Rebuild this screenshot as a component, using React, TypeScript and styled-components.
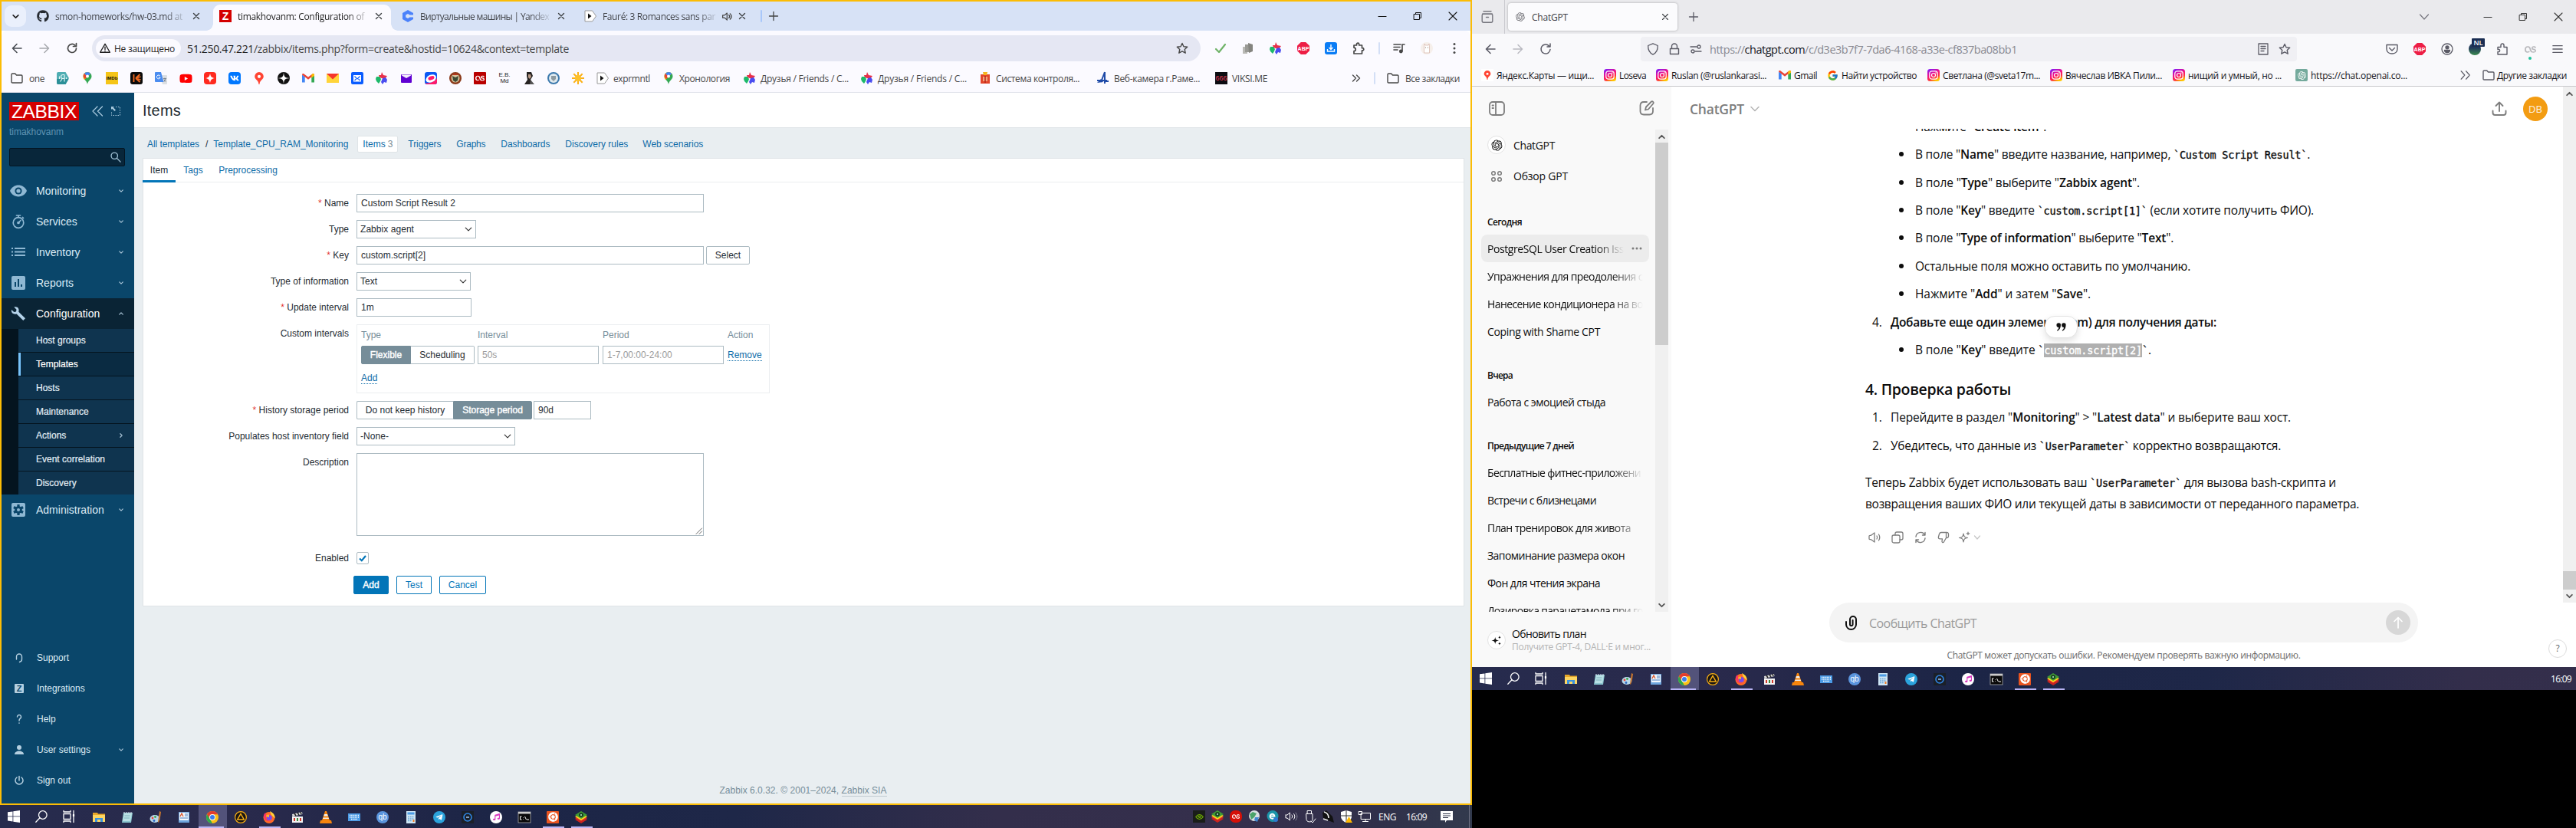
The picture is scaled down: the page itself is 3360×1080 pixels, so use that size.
import React, { ReactNode, useLayoutEffect, useRef } from "react";
import styled, { createGlobalStyle, css } from "styled-components";
import { FaGithub, FaTelegramPlane, FaUbuntu, FaVk, FaMusic, FaLastfm, FaYoutube } from "react-icons/fa";
import { FcGoogle } from "react-icons/fc";
import { RiOpenaiFill } from "react-icons/ri";

const UI = `"Open Sans", "Noto Sans", sans-serif`;
const ARIAL = `"Liberation Sans", Arial, sans-serif`;

const Global = createGlobalStyle`
  * { box-sizing: border-box; }
  html, body { margin: 0; padding: 0; background: #000; }
  body { width: 3360px; height: 1080px; overflow: hidden; font-family: ${UI}; }
  svg { display: block; flex: none; overflow: visible; }
`;

/* ---------- text that tracks itself to a given measure ---------- */
const Run = styled.span`
  display: inline-block;
  white-space: pre;
  flex: none;
`;
function Fit({ w, children }: { w: number; children: ReactNode }) {
  const ref = useRef<HTMLSpanElement>(null);
  useLayoutEffect(() => {
    const el = ref.current;
    if (!el) return;
    el.style.letterSpacing = "0px";
    const natural = el.getBoundingClientRect().width;
    const n = (el.textContent || "").length || 1;
    el.style.letterSpacing = `${(w - natural) / n}px`;
  }, [w]);
  return <Run ref={ref}>{children}</Run>;
}

/* ---------- icon helpers ---------- */
type IP = { s?: number; c?: string; sw?: number; vb?: number; fill?: boolean; children?: ReactNode };
const Ico = ({ s = 16, c = "#474747", sw = 1.5, vb = 16, fill, children }: IP) => (
  <svg width={s} height={s} viewBox={`0 0 ${vb} ${vb}`} fill={fill ? c : "none"} stroke={fill ? "none" : c} strokeWidth={sw} strokeLinecap="round" strokeLinejoin="round">
    {children}
  </svg>
);
const Raw = ({ s = 16, children }: { s?: number; children: ReactNode }) => (
  <svg width={s} height={s} viewBox="0 0 16 16">{children}</svg>
);
const Cross = ({ s = 8, c = "#3c4043", sw = 1.4 }: IP) => <Ico s={s} vb={8} c={c} sw={sw}><path d="M.5.5l7 7M7.500.5l-7 7" /></Ico>;
const Plus = ({ s = 12, c = "#444" }: IP) => <Ico s={s} vb={12} c={c} sw={1.3}><path d="M6 .5v11M.5 6h11" /></Ico>;
const Chevron = ({ s = 6, c = "#a9c4d6", dir = "down", sw = 1.2 }: IP & { dir?: string }) => (
  <Ico s={s} vb={8} c={c} sw={sw * 8 / s}>
    <path d={dir === "down" ? "M1 2.500l3 3 3-3" : dir === "up" ? "M1 5.500l3-3 3 3" : "M2.500 1l3 3-3 3"} />
  </Ico>
);
const BackArrow = ({ c }: { c: string }) => <Ico c={c} sw={1.6}><path d="M14 8H2.500M8 2.500L2.500 8 8 13.500" /></Ico>;
const FwdArrow = ({ c }: { c: string }) => <Ico c={c} sw={1.5}><path d="M2 8h11.500M8 2.500L13.500 8 8 13.500" /></Ico>;
const Reload = () => <Ico c="#474747" sw={1.7}><path d="M13.500 8A5.500 5.500 0 1 1 11.800 4M13.500 1.500V5.500H9.500" /></Ico>;
const Star = ({ c = "#474747" }: IP) => <Ico c={c} sw={1.4}><path d="M8 1.500l2 4.300 4.700.5-3.500 3.200 1 4.700L8 11.800l-4.200 2.400 1-4.700L1.300 6.300 6 5.800z" /></Ico>;
const Folder = ({ c = "#474747" }: IP) => <Ico c={c} sw={1.4}><path d="M1 3.200c0-.8.500-1.200 1.200-1.200h3.500l1.800 2h6.300c.800 0 1.200.5 1.200 1.200v7.600c0 .8-.4 1.200-1.200 1.200H2.200c-.7 0-1.200-.4-1.200-1.200z" /></Ico>;
const Puzzle = () => <Ico c="#474747" sw={1.7}><path d="M2 4h3.500V2.800a1.600 1.600 0 0 1 3.200 0V4h3.800v3.700h.7a1.600 1.600 0 0 1 0 3.200h-.7V15H2v-3.300c3-.3 3-4.200 0-4.500z" /></Ico>;
const Raquo = ({ c = "#474747" }: IP) => <Ico s={12} vb={12} c={c} sw={1.4}><path d="M1.500 2l4 4-4 4M6.500 2l4 4-4 4" /></Ico>;

const Pin = ({ multi }: { multi?: boolean }) => multi ? (
  <Raw><path d="M8 0a5.500 5.500 0 0 1 5.500 5.500C13.500 9.500 8.800 11 8 16 7.200 11 2.500 9.500 2.500 5.500A5.500 5.500 0 0 1 8 0z" fill="#34a853" /><path d="M8 0a5.500 5.500 0 0 1 4.200 2L4 10C3 8.700 2.500 7.500 2.500 5.500A5.500 5.500 0 0 1 8 0z" fill="#fbbc04" /><path d="M8 0a5.500 5.500 0 0 1 4.200 2L8 6 3.800 2A5.500 5.500 0 0 1 8 0z" fill="#4285f4" /><path d="M3.800 2L8 6 5 9C3 7.500 2 4.500 3.800 2z" fill="#ea4335" /><circle cx="8" cy="5.500" r="2" fill="#fff" /></Raw>
) : (
  <Raw><path d="M8 0a5.800 5.800 0 0 1 5.800 5.800c0 4-5 4.400-5.300 10.200h-1C7.200 10.200 2.200 9.800 2.200 5.800A5.800 5.800 0 0 1 8 0z" fill="#f43" /><circle cx="8" cy="5.800" r="2.100" fill="#fff" /></Raw>
);
const Gmail = () => <Raw><path d="M0 13.500V3.500L3.700 6v7.500z" fill="#4285f4" /><path d="M12.300 13.500V6L16 3.500v10z" fill="#34a853" /><path d="M0 3.500C0 2 1.800 1.700 2.600 2.400L8 6.500l5.400-4.100c.800-.7 2.600-.4 2.600 1.100L8 9.800z" fill="#ea4335" /><path d="M12.300 3.200l1.100-.8c.800-.7 2.600-.4 2.600 1.100v1.300L12.300 7.700z" fill="#fbbc04" /></Raw>;
const FriendStar = () => <Raw><path d="M8 0l2 4 5 1-3 4-4-1-3-1-1-3 3 0z" fill="#e8304a" /><path d="M1 6h4l2 3-1 3-2 3-3-3-1-3z" fill="#1db96a" /><path d="M9 8l4-1 2 3-1 4-3-1-2 3-2-3z" fill="#4a4df0" /></Raw>;
const Play = () => <Raw><path d="M1 1h9.500L15.500 8l-5 7H1z" fill="#fff" stroke="#999" strokeWidth="1" strokeLinejoin="round" /><path d="M5 4.500v7L9.500 8z" fill="#111" /></Raw>;
const Insta = () => (
  <Raw><defs><linearGradient id="ig" x1=".1" y1="0" x2=".6" y2="1"><stop offset="0" stopColor="#7a1cff" /><stop offset=".45" stopColor="#f0108a" /><stop offset=".75" stopColor="#ff3040" /><stop offset="1" stopColor="#ffc800" /></linearGradient></defs>
    <rect width="16" height="16" rx="3.500" fill="url(#ig)" /><rect x="2.800" y="2.800" width="10.400" height="10.400" rx="3" fill="none" stroke="#fff" strokeWidth="1.200" /><circle cx="8" cy="8" r="2.500" fill="none" stroke="#fff" strokeWidth="1.200" /><circle cx="11" cy="5" r=".7" fill="#fff" /></Raw>
);

const Badge = styled.span<{ $bg: string; $c?: string; $r?: number; $fs?: number; $s?: number; $w?: number }>`
  display: flex; align-items: center; justify-content: center; flex: none;
  width: ${(p) => p.$s || 16}px; height: ${(p) => p.$s || 16}px;
  background: ${(p) => p.$bg}; color: ${(p) => p.$c || "#fff"};
  border-radius: ${(p) => p.$r || 0}px;
  font: ${(p) => p.$w || 700} ${(p) => p.$fs || 8}px/1 ${ARIAL};
`;
const AbpBox = styled.span` clip-path: polygon(30% 0, 70% 0, 100% 30%, 100% 70%, 70% 100%, 30% 100%, 0 70%, 0 30%); `;
const Abp = () => <AbpBox><Badge $bg="#ed1e45" $fs={7}>ABP</Badge></AbpBox>;

/* ---------- shared layout ---------- */
const Desktop = styled.div` display: flex; width: 3360px; height: 1080px; background: #000; `;
const Monitor = styled.section<{ $w: number; $h: number }>`
  width: ${(p) => p.$w}px; height: ${(p) => p.$h}px; display: flex; flex-direction: column; flex: none; overflow: hidden;
`;
const Slot = styled.span<{ $w: number }>`
  width: ${(p) => p.$w}px; flex: none; display: flex; align-items: center; justify-content: center;
`;
const Gap = styled.span<{ $w?: number }>` width: ${(p) => p.$w || 0}px; flex: ${(p) => (p.$w ? "none" : "1")}; `;
const Gap2 = styled.span<{ $h?: number }>` height: ${(p) => p.$h || 0}px; flex: ${(p) => (p.$h ? "none" : "1")}; `;
const Rule = styled.span<{ $c: string; $h: number }>` width: 2px; height: ${(p) => p.$h}px; background: ${(p) => p.$c}; border-radius: 1px; flex: none; `;

/* ---------- Chrome ---------- */
const ChromeFrame = styled.div`
  height: 1050px; border: 2px solid #fbbc05; display: flex; flex-direction: column; background: #fff;
`;
const TabStrip = styled.div`
  height: 38px; background: #d7e2f6; display: flex; padding-left: 4px; align-items: center; flex: none;
`;
const TabMenu = styled.button`
  width: 28px; height: 28px; border: 0; padding: 0; border-radius: 9px; background: #eaf0fc; display: grid; place-items: center; margin-right: 6px;
`;
const ChromeTab = styled.div`
  width: 238px; height: 38px; padding: 4px 6px 0 0; flex: none; display: flex; align-items: stretch;
`;
const TabFace = styled.div<{ $active?: boolean }>`
  position: relative; width: 232px; padding: 0 0 4px 8px; display: flex; align-items: center; gap: 8px; font-size: 12px; color: ${(p) => (p.$active ? "#1f1f1f" : "#44474d")};
  ${(p) => p.$active && css`
    background: #fbfaff; border-radius: 9px 9px 0 0;
    &::before, &::after { content: ""; position: absolute; bottom: 0; width: 9px; height: 9px; }
    &::before { left: -9px; background: radial-gradient(circle at 0 0, transparent 8.500px, #fbfaff 9px); }
    &::after { right: -9px; background: radial-gradient(circle at 100% 0, transparent 8.500px, #fbfaff 9px); }
  `}
`;
const TabText = styled.span<{ $w: number }>`
  width: ${(p) => p.$w}px; white-space: nowrap; flex: none;
  mask-image: linear-gradient(to right, #000 calc(100% - 24px), rgba(0,0,0,.15));
`;
const WinButtons = styled.div` display: flex; height: 38px; align-items: center; `;
const ChromeBar = styled.div`
  height: 46px; background: #fbfaff; display: flex; align-items: center; flex: none; padding-left: 2px; border-radius: 8px 8px 0 0;
`;
const Omnibox = styled.div`
  width: 1446px; height: 34px; border-radius: 17px; background: #e5e7f3; display: flex; align-items: center; padding: 0 16px 0 5px; margin-left: 8px; font-size: 14px; color: #474747;
  b { font-weight: 400; color: #1f1f1f; }
`;
const Chip = styled.span`
  width: 111px; height: 24px; border-radius: 12px; background: #fbfaff; display: flex; align-items: center; padding-left: 5px; gap: 5px; font-size: 12px; color: #1f1f1f; margin-right: 8px; flex: none;
`;
const ChromeMarks = styled.div`
  height: 35px; padding-bottom: 2px; background: #fbfaff; border-bottom: 1px solid #dfe1ea; display: flex; align-items: center; flex: none; padding-left: 12px; font-size: 12px; color: #474747;
`;
const Mark = styled.span<{ $w: number; $gap: number }>`
  width: ${(p) => p.$w}px; display: flex; align-items: center; gap: ${(p) => p.$gap}px; flex: none;
`;
const Emb = styled.span` font: 400 8px/8px ${ARIAL}; color: #222; text-align: center; `;

function WindowButtons({ c = "#111", gap = 46 }: { c?: string; gap?: number }) {
  return (
    <WinButtons>
      <Slot $w={gap}><Ico s={10} vb={10} c={c} sw={1.2}><path d="M0 5.500h10" /></Ico></Slot>
      <Slot $w={gap}><Ico s={10} vb={10} c={c} sw={1}><path d="M.5 2.500h7v7h-7zM2.500 2.500v-2h7v7h-2" /></Ico></Slot>
      <Slot $w={gap}><Ico s={10} vb={10} c={c} sw={1.1}><path d="M0 0l10 10M10 0L0 10" /></Ico></Slot>
    </WinButtons>
  );
}

function ChromeTop() {
  return (
    <>
      <TabStrip>
        <TabMenu><Chevron s={9} c="#1f1f1f" sw={1.6} /></TabMenu>
        <ChromeTab><TabFace><FaGithub size={16} color="#24292f" /><TabText $w={168}><Fit w={166}>smon-homeworks/hw-03.md at</Fit></TabText><Slot $w={16}><Cross /></Slot></TabFace></ChromeTab>
        <ChromeTab><TabFace $active><Badge $bg="#d40000" $fs={14}>Z</Badge><TabText $w={168}><Fit w={165}>timakhovanm: Configuration of</Fit></TabText><Slot $w={16}><Cross /></Slot></TabFace></ChromeTab>
        <ChromeTab><TabFace><Raw><path d="M8 0l7 4v2.500h-4.500L8 5 5.200 6.500v3L8 11l2.500-1.500H15V12l-7 4-7-4V4z" fill="#4b82fb" /></Raw><TabText $w={168}><Fit w={168}>Виртуальные машины | Yandex</Fit></TabText><Slot $w={16}><Cross /></Slot></TabFace></ChromeTab>
        <ChromeTab><TabFace><Play /><TabText $w={148}><Fit w={147}>Fauré: 3 Romances sans par</Fit></TabText>
          <Slot $w={10}><Ico s={13} c="#474747" sw={1.6}><path d="M2 6v4h3l4 3.500v-11L5 6zM12 5.500c1.300 1.500 1.300 3.500 0 5M14 3.500c2.300 2.600 2.300 6.400 0 9" /></Ico></Slot>
          <Slot $w={16}><Cross /></Slot></TabFace></ChromeTab>
        <Rule $c="#a8c7fa" $h={16} />
        <Slot $w={30}><Plus /></Slot>
        <Gap />
        <WindowButtons gap={46} />
      </TabStrip>
      <ChromeBar>
        <Slot $w={36}><BackArrow c="#474b52" /></Slot>
        <Slot $w={36}><FwdArrow c="#a6a8ad" /></Slot>
        <Slot $w={36}><Reload /></Slot>
        <Omnibox>
          <Chip><Ico s={14} c="#1f1f1f" sw={1.5}><path d="M8 1.500L15.300 14H.7zM8 6v4M8 12v.2" /></Ico><Fit w={79}>Не защищено</Fit></Chip>
          <Fit w={498}><b>51.250.47.221</b>/zabbix/items.php?form=create&amp;hostid=10624&amp;context=template</Fit>
          <Gap /><Star />
        </Omnibox>
        <Gap $w={8} />
        <Slot $w={36}><Ico c="#6fb368" sw={2.2}><path d="M2 9l4 4 8-10" /></Ico></Slot>
        <Slot $w={36}><Raw><path d="M1 6h6v9H1z" fill="#b9b9b5" /><path d="M4 3h6v10H4z" fill="#9a9a96" /><path d="M8 1l6 2v9l-5 2z" fill="#84847f" /></Raw></Slot>
        <Slot $w={36}><FriendStar /></Slot>
        <Slot $w={36}><Abp /></Slot>
        <Slot $w={36}><Raw><rect width="16" height="16" rx="3" fill="#0a7cf5" /><path d="M8 3v6M5.500 7L8 9.500 10.500 7M3.500 9v3h9V9" stroke="#fff" strokeWidth="1.400" fill="none" /></Raw></Slot>
        <Slot $w={36}><Puzzle /></Slot>
        <Gap $w={8} /><Rule $c="#d3dff6" $h={16} /><Gap $w={7} />
        <Slot $w={36}><Ico sw={1.6}><path d="M1 3h9M1 6.500h8M1 10h5M12 3v9M12 3h3" /><circle cx="10.300" cy="12" r="1.600" fill="#474747" /></Ico></Slot>
        <Slot $w={36}><Raw><circle cx="8" cy="8" r="8" fill="#f6efeb" /><path d="M5 2l1 2h4l1-2 .5 4v8h-7V6z" fill="#fff" stroke="#d9b9ae" strokeWidth=".8" /><circle cx="6.500" cy="7" r=".6" fill="#765" /><circle cx="9.500" cy="7" r=".6" fill="#765" /></Raw></Slot>
        <Slot $w={36}><Ico fill><circle cx="8" cy="2.500" r="1.500" /><circle cx="8" cy="8" r="1.500" /><circle cx="8" cy="13.500" r="1.500" /></Ico></Slot>
      </ChromeBar>
      <ChromeMarks>
        <Mark $w={52} $gap={8}><Folder /><Fit w={20}>one</Fit></Mark>
        <Slot $w={32}><Raw><path d="M0 2a2 2 0 0 1 2-2h9.500l4.500 8-4.500 8H2a2 2 0 0 1-2-2z" fill="#4fadb3" /><path d="M0 9h15.500L11.500 16H2a2 2 0 0 1-2-2z" fill="#2b8f98" /><path d="M4.500 12.500l2.500-3.500M10 3.500H8a2.500 2.500 0 0 0 0 5h2M10 3.500v9M3.500 5.500v3.500M12.500 7v2" stroke="#e4f6f6" fill="none" strokeWidth="1.200" /></Raw></Slot>
        <Slot $w={32}><Pin multi /></Slot>
        <Slot $w={32}><Badge $bg="#f5c518" $c="#111" $fs={6}>IMDb</Badge></Slot>
        <Slot $w={32}><Raw><rect width="16" height="16" rx="3" fill="#0b0b0b" /><path d="M4.500 3v10M7 8l5.500-5M7 8l5.500 5M7 8l6.500-2M7 8l6.500 2" stroke="#f36b21" strokeWidth="1.800" /></Raw></Slot>
        <Slot $w={32}><Raw><path d="M6 4h9a1 1 0 0 1 1 1v10a1 1 0 0 1-1 1h-5z" fill="#dcdfe3" /><path d="M1 0h7l3.500 13H1a1 1 0 0 1-1-1V1a1 1 0 0 1 1-1z" fill="#4a8cf0" /><path d="M6.800 5a2.400 2.400 0 1 0 .3 2.200H4.800" stroke="#fff" fill="none" /><path d="M11 8.500h4M13 7.500v1M14 8.500l-2 4M12 9.500l2 3" stroke="#7a8590" fill="none" /></Raw></Slot>
        <Slot $w={32}><FaYoutube size={17} color="#f00" /></Slot>
        <Slot $w={32}><Raw><rect width="16" height="16" rx="4" fill="#ff2a1f" /><path d="M8 2c.8 4 2 5.200 6 6-4 .8-5.200 2-6 6-.8-4-2-5.200-6-6 4-.8 5.200-2 6-6z" fill="#fff" /></Raw></Slot>
        <Slot $w={32}><Badge $bg="#07f" $r={4}><FaVk size={12} /></Badge></Slot>
        <Slot $w={32}><Pin /></Slot>
        <Slot $w={32}><Raw><circle cx="8" cy="8" r="8" fill="#111" /><path d="M8 0c.4 6.400 1.600 7.600 8 8-6.400.4-7.600 1.600-8 8-.4-6.400-1.600-7.600-8-8 6.400-.4 7.600-1.600 8-8z" fill="#fff" /></Raw></Slot>
        <Slot $w={32}><Gmail /></Slot>
        <Slot $w={32}><Raw><path d="M0 2h16v12H0z" fill="#ffd43a" /><path d="M0 2h16L8 9.500z" fill="#f6352b" /></Raw></Slot>
        <Slot $w={32}><Raw><rect width="16" height="16" rx="2" fill="#0a5cff" /><path d="M3 4h10v8.500H3z" fill="#fff" /><path d="M4.500 5.500L8 9l3.500-3.500M4.500 11L6.500 9M11.500 11L9.500 9" stroke="#0a5cff" fill="none" strokeWidth="1.200" /></Raw></Slot>
        <Slot $w={32}><FriendStar /></Slot>
        <Slot $w={32}><Raw><rect x="1" y="3" width="14" height="11" rx="1" fill="#6001d2" /><path d="M2 3.500h12v1L8 8 2 4.500z" fill="#f5effc" /></Raw></Slot>
        <Slot $w={32}><Raw><rect width="16" height="16" rx="3" fill="#0b58f4" /><path d="M16 8v5a3 3 0 0 1-3 3H3c-1 0-2-.8-2.500-1.500C6 15 12 13 16 8z" fill="#ff1a6a" /><ellipse cx="8" cy="8.500" rx="7" ry="4.800" fill="#fff" transform="rotate(-25 8 8)" /><ellipse cx="8.500" cy="8" rx="4.200" ry="2.400" fill="#ff1a6a" transform="rotate(-20 8 8)" /></Raw></Slot>
        <Slot $w={32}><Raw><circle cx="8" cy="8" r="8" fill="#8a3a1a" /><circle cx="8" cy="8" r="5.500" fill="#d9c6a0" /><path d="M4 5l4 2 4-2-1 6-3 2-3-2z" fill="#3c4a34" /><path d="M5 2h6v2H5z" fill="#b5371e" /></Raw></Slot>
        <Slot $w={32}><Badge $bg="#b90000" $r={1}><FaLastfm size={12} /></Badge></Slot>
        <Slot $w={32}><Emb>E.B.<br />Md</Emb></Slot>
        <Slot $w={32}><Raw><path d="M5 0h6l2 5-3 5 2 6H2l4-6-1-5z" fill="#262322" /><path d="M7 3h3l1 3-2 3-2-2z" fill="#b99b87" /><path d="M10 10l5 6H9z" fill="#555" /></Raw></Slot>
        <Slot $w={32}><Raw><circle cx="8" cy="8" r="8" fill="#3c79ad" /><circle cx="8" cy="8" r="6" fill="#dfe9ee" /><path d="M5 5h6v4l-3 3-3-3z" fill="#8d9aa0" /></Raw></Slot>
        <Slot $w={32}><Raw><g stroke="#fbb117" strokeWidth="2"><path d="M8 0v16M0 8h16M2.300 2.300l11.400 11.400M13.700 2.300L2.300 13.700" /></g><circle cx="8" cy="8" r="4" fill="#fcc12b" /></Raw></Slot>
        <Gap $w={8} />
        <Mark $w={86} $gap={6}><Play /><Fit w={48}>exprmntl</Fit></Mark>
        <Mark $w={106} $gap={6}><Pin multi /><Fit w={66}>Хронология</Fit></Mark>
        <Mark $w={153} $gap={6}><FriendStar /><Fit w={115}>Друзья / Friends / С...</Fit></Mark>
        <Mark $w={154} $gap={6}><FriendStar /><Fit w={116}>Друзья / Friends / С...</Fit></Mark>
        <Mark $w={154} $gap={6}><Raw><path d="M2 3h12v12H2z" fill="#e2452a" /><path d="M5 0h6l-1 4H6z" fill="#f5b31b" /><path d="M5 6h6v6H5z" fill="#f2a27a" /><path d="M8 5v9" stroke="#b3251a" strokeWidth="1.500" /></Raw><Fit w={109}>Система контроля...</Fit></Mark>
        <Mark $w={154} $gap={6}><Raw><path d="M10 0L5 13M10 0v15M0 11h13M9 12h6" stroke="#1f4ba8" strokeWidth="2" /><path d="M0 14l5-5 3 4z" fill="#1f4ba8" /></Raw><Fit w={112}>Веб-камера г.Раме...</Fit></Mark>
        <Mark $w={100} $gap={6}><Badge $bg="#0c0c12" $c="#e23a55" $fs={9} $w={400}>666</Badge><Fit w={46}>VIKSI.ME</Fit></Mark>
        <Gap />
        <Slot $w={20}><Raquo /></Slot>
        <Gap $w={13} /><Rule $c="#d3dff6" $h={16} /><Gap $w={15} />
        <Mark $w={109} $gap={8}><Folder /><Fit w={71}>Все закладки</Fit></Mark>
      </ChromeMarks>
    </>
  );
}

/* ---------- Zabbix ---------- */
const Zabbix = styled.div` flex: 1; display: flex; min-height: 0; background: #e9eef1; font-family: ${ARIAL}; font-size: 12px; color: #1f2c33; `;
const Side = styled.aside` width: 173px; background: #0a466a; display: flex; flex-direction: column; padding: 12px 0 10px; flex: none; `;
const SideHead = styled.div` display: flex; align-items: center; height: 24px; padding-left: 10px; `;
const Logo = styled.div` width: 91px; height: 24px; background: #d40000; color: #fff; font: 400 24.500px/25px ${ARIAL}; padding-left: 3px; margin-right: 16px; `;
const Server = styled.div` margin: 8px 0 0 10px; height: 14px; line-height: 14px; color: #5f93b3; `;
const Search = styled.div`
  margin: 14px 12px 12px 10px; height: 24px; border: 1px solid #031522; border-radius: 2px; background: #08263a; display: flex; justify-content: flex-end; align-items: center; padding-right: 4px;
`;
const MenuRow = styled.div<{ $on?: boolean }>`
  height: 40px; display: flex; align-items: center; font-size: 14px; color: ${(p) => (p.$on ? "#fff" : "#dcebf5")}; background: ${(p) => (p.$on ? "#0a2435" : "none")}; padding-right: 14px; flex: none;
`;
const MenuIcon = styled.span` width: 45px; display: flex; justify-content: center; padding-right: 1px; flex: none; `;
const Sub = styled.div` background: #04141f; padding-left: 22px; display: flex; flex-direction: column; gap: 1px; height: 216px; flex: none; `;
const SubRow = styled.div<{ $on?: boolean }>`
  height: 30px; background: ${(p) => (p.$on ? "#0a2b42" : "#0f344f")};
  box-shadow: inset 3px 0 0 ${(p) => (p.$on ? "#78c4fb" : "#0f344f")};
  padding: 0 14px 0 23px; display: flex; align-items: center; justify-content: space-between; color: ${(p) => (p.$on ? "#fff" : "#e3eef5")};
  -webkit-text-stroke: 0.200px currentColor;
`;
const FootRow = styled(MenuRow)` font-size: 12px; padding-left: 1px; `;
const Page = styled.main` flex: 1; display: flex; flex-direction: column; `;
const PageHead = styled.header` height: 46px; background: #fff; border-bottom: 1px solid #dfe4e7; padding-left: 11px; font-size: 20px; line-height: 46px; `;
const Nav = styled.nav` height: 39px; padding: 10px 0 0 17px; display: flex; color: #0e6ca8; line-height: 22px; i { font-style: normal; color: #1f2c33; } `;
const NavItem = styled.span<{ $ml?: number }>` margin-left: ${(p) => p.$ml || 0}px; flex: none; `;
const NavOn = styled.span` width: 53px; height: 22px; margin-left: 12px; background: #fff; border: 1px solid #dfe4e7; border-radius: 2px; padding-left: 6px; line-height: 20px; small { font-size: 12px; color: #768d99; margin-left: 3px; } `;
const Panel = styled.section` width: 1724px; height: 585px; margin-left: 11px; background: #fff; border: 1px solid #dfe4e7; flex: none; `;
const PTabs = styled.div` height: 31px; border-bottom: 1px solid #ebeef0; display: flex; color: #0e6ca8; `;
const PTab = styled.span<{ $on?: boolean; $w: number }>`
  width: ${(p) => p.$w}px; text-align: center; line-height: 30px; ${(p) => p.$on && css` color: #1f2c33; border-bottom: 3px solid #0275b8; margin-left: -1px; height: 31px; `}
`;
const Form = styled.div` padding-top: 15px; display: flex; flex-direction: column; gap: 10px; `;
const FRow = styled.div` display: flex; align-items: flex-start; `;
const Label = styled.label<{ $req?: boolean }>`
  width: 268px; margin-right: 10px; text-align: right; line-height: 24px; flex: none;
  ${(p) => p.$req && css` &::before { content: "* "; color: #e33734; } `}
`;
const Box = styled.div<{ $w: number; $h?: number; $ml?: number; $ph?: boolean }>`
  width: ${(p) => p.$w}px; height: ${(p) => p.$h || 24}px; margin-left: ${(p) => p.$ml || 0}px; border: 1px solid #acbbc2; padding: 0 5px; line-height: 22px; flex: none;
  color: ${(p) => (p.$ph ? "#9b9b9b" : "inherit")}; display: flex; justify-content: space-between; align-items: center;
`;
const SelectBox = styled(Box)` padding: 0 4px; `;
const Seg = styled.span<{ $w: number; $on?: boolean; $side: "l" | "r" }>`
  width: ${(p) => p.$w}px; height: 24px; line-height: 22px; text-align: center; border: 1px solid ${(p) => (p.$on ? "#768d99" : "#acbbc2")}; flex: none;
  background: ${(p) => (p.$on ? "#768d99" : "#fff")}; color: ${(p) => (p.$on ? "#fff" : "inherit")}; ${(p) => p.$on && "-webkit-text-stroke: 0.400px #fff;"}
  border-radius: ${(p) => (p.$side === "l" ? "2px 0 0 2px" : "0 2px 2px 0")};
  ${(p) => (!p.$on ? (p.$side === "l" ? "border-right: 0;" : "border-left: 0;") : "")}
`;
const Btn = styled.button<{ $w: number; $kind?: "main" | "alt" }>`
  width: ${(p) => p.$w}px; height: 24px; padding: 0; font: 400 12px/22px ${ARIAL}; border-radius: 2px; flex: none;
  border: 1px solid ${(p) => (p.$kind ? "#0275b8" : "#acbbc2")};
  background: ${(p) => (p.$kind === "main" ? "#0275b8" : "#fff")};
  color: ${(p) => (p.$kind === "main" ? "#fff" : p.$kind === "alt" ? "#0275b8" : "#1f2c33")};
  ${(p) => p.$kind === "main" && "-webkit-text-stroke: 0.400px #fff;"}
`;
const Intervals = styled.div` width: 539px; height: 90px; border: 1px solid #ebeef0; padding: 5px; `;
const IGrid = styled.div` display: grid; grid-template-columns: 152px 163px 163px 1fr; `;
const IHead = styled(IGrid)` color: #768d99; height: 22px; line-height: 16px; `;
const Link = styled.span` color: #0e6ca8; border-bottom: 1px dotted #0e6ca8; line-height: 14px; align-self: center; justify-self: start; `;
const AddLine = styled.div` display: flex; margin-top: 11px; `;
const Check = styled.span` width: 16px; height: 16px; margin-top: 4px; border: 1px solid #acbbc2; border-radius: 2px; display: grid; place-items: center; `;
const Buttons = styled.div` display: flex; gap: 10px; margin: 1px 0 0 274px; `;
const TextArea = styled.div` width: 453px; height: 108px; border: 1px solid #acbbc2; display: flex; justify-content: flex-end; align-items: flex-end; padding: 1px; `;
const EnabledRow = styled(FRow)` margin-top: 7px; `;
const PageFoot = styled.footer` margin-top: auto; height: 24px; line-height: 15px; text-align: center; color: #768d99; padding-left: 2px; u { text-decoration: none; border-bottom: 1px solid #c0cad0; } `;

const mc = "#8fb8d3";
const menuIcons: Record<string, ReactNode> = {
  Monitoring: <svg width="22" height="16" viewBox="0 0 22 16"><path d="M0 8C4-2 18-2 22 8 18 18 4 18 0 8z" fill={mc} /><circle cx="11" cy="8" r="4.600" fill="#0a466a" /><circle cx="11" cy="8" r="2.600" fill={mc} /></svg>,
  Services: <Ico s={18} vb={18} c={mc} sw={1.7}><circle cx="9" cy="10.500" r="6.800" /><path d="M6.500 1h5M9 1v2.500M14.500 3.500l1 1M9 10.500l3-3" /><circle cx="9" cy="10.500" r="1" /></Ico>,
  Inventory: <svg width="18" height="12" viewBox="0 0 18 12" fill={mc}><path d="M0 0h2v2H0zM4 0h14v2H4zM0 4.500h2v2H0zM4 4.500h14v2H4zM0 9h2v2H0zM4 9h14v2H4z" /></svg>,
  Reports: <svg width="18" height="18" viewBox="0 0 18 18"><rect width="18" height="18" rx="2" fill={mc} /><path d="M4 8h2v6H4zM8 4h2v10H8zM12 11h2v3h-2z" fill="#0a466a" /></svg>,
  Administration: <svg width="18" height="18" viewBox="0 0 18 18"><rect width="18" height="18" rx="2" fill={mc} /><path d="M9 2v14M3 5.500l12 7M15 5.500l-12 7" stroke="#0a466a" strokeWidth="3.200" /><circle cx="9" cy="9" r="4.800" fill="#0a466a" /><circle cx="9" cy="9" r="2" fill={mc} /></svg>,
};
const fc = "#b4cfe0";

function FieldSelect({ w, text, tw }: { w: number; text: string; tw: number }) {
  return <SelectBox $w={w}><Fit w={tw}>{text}</Fit><Chevron s={10} c="#333" sw={1.2} /></SelectBox>;
}

function ZabbixPage() {
  return (
    <Zabbix>
      <Side>
        <SideHead>
          <Logo><Fit w={85}>ZABBIX</Fit></Logo>
          <Ico s={16} c="#a9c9dd" sw={1.3}><path d="M8 2L2 8l6 6M14.500 2l-6 6 6 6" /></Ico>
          <Gap $w={10} />
          <svg width="12" height="12" viewBox="0 0 12 12"><path d="M6 .5h5.500v11H.5V6" fill="none" stroke="#a9c9dd" strokeDasharray="1.500 1.500" /><path d="M0 0h4L2.800 1.200 6 4.500 4.500 6 1.200 2.800 0 4z" fill="#a9c9dd" /></svg>
        </SideHead>
        <Server><Fit w={71}>timakhovanm</Fit></Server>
        <Search><Ico s={14} c="#9fc0d4" sw={1.5}><circle cx="6" cy="6" r="4.800" /><path d="M9.500 9.500L15 15" /></Ico></Search>
        {["Monitoring", "Services", "Inventory", "Reports"].map((m) => (
          <MenuRow key={m}><MenuIcon>{menuIcons[m]}</MenuIcon>{m}<Gap /><Chevron /></MenuRow>
        ))}
        <MenuRow $on><MenuIcon><svg width="18" height="18" viewBox="0 0 18 18"><path d="M0 4l3.300 3 2.700-.5.500-2.700L3.300.5C8-.8 10.500 2.500 9.300 6.800L18 15.200 15.300 18 6.600 9.500C2.500 10.500-.8 8 0 4z" fill="#b4d3ea" /></svg></MenuIcon>Configuration<Gap /><Chevron dir="up" /></MenuRow>
        <Sub>
          {["Host groups", "Templates", "Hosts", "Maintenance", "Actions", "Event correlation", "Discovery"].map((m) => (
            <SubRow key={m} $on={m === "Templates"}>{m}{m === "Actions" && <Chevron dir="right" />}</SubRow>
          ))}
        </Sub>
        <MenuRow><MenuIcon>{menuIcons.Administration}</MenuIcon>Administration<Gap /><Chevron /></MenuRow>
        <Gap />
        <FootRow><MenuIcon><Ico s={12} vb={12} c={fc} sw={1.4}><path d="M2.500 8V4.500a3.500 3.500 0 0 1 7 0V8M2.500 5v3M9.500 5v3c0 2-1 3-3 3.500" /></Ico></MenuIcon>Support</FootRow>
        <FootRow><MenuIcon><Badge $s={12} $r={1} $bg={fc} $c="#0a466a" $fs={11}>Z</Badge></MenuIcon>Integrations</FootRow>
        <FootRow><MenuIcon><Ico s={12} vb={12} c={fc} sw={1.5}><path d="M3.500 3a2.500 2.500 0 1 1 3.800 2.200C6.300 6 6 6.500 6 8M6 11v.2" /></Ico></MenuIcon>Help</FootRow>
        <FootRow><MenuIcon><Ico s={12} vb={12} c={fc} fill><circle cx="6" cy="3" r="3" /><path d="M0 12c0-6 12-6 12 0z" /></Ico></MenuIcon>User settings<Gap /><Chevron /></FootRow>
        <FootRow><MenuIcon><Ico s={12} vb={12} c={fc} sw={1.5}><path d="M6 .5V6M3 2a5 5 0 1 0 6 0" /></Ico></MenuIcon>Sign out</FootRow>
      </Side>
      <Page>
        <PageHead><Fit w={50}>Items</Fit></PageHead>
        <Nav>
          <NavItem><Fit w={68}>All templates</Fit></NavItem><NavItem $ml={8}><i>/</i></NavItem>
          <NavItem $ml={7}><Fit w={176}>Template_CPU_RAM_Monitoring</Fit></NavItem>
          <NavOn>Items<small>3</small></NavOn>
          <NavItem $ml={13}><Fit w={43}>Triggers</Fit></NavItem>
          <NavItem $ml={20}><Fit w={38}>Graphs</Fit></NavItem>
          <NavItem $ml={20}><Fit w={64}>Dashboards</Fit></NavItem>
          <NavItem $ml={20}><Fit w={82}>Discovery rules</Fit></NavItem>
          <NavItem $ml={19}><Fit w={79}>Web scenarios</Fit></NavItem>
        </Nav>
        <Panel>
          <PTabs><PTab $on $w={43}>Item</PTab><PTab $w={46}>Tags</PTab><PTab $w={97}>Preprocessing</PTab></PTabs>
          <Form>
            <FRow><Label $req>Name</Label><Box $w={453}><Fit w={123}>Custom Script Result 2</Fit></Box></FRow>
            <FRow><Label>Type</Label><FieldSelect w={156} text="Zabbix agent" tw={70} /></FRow>
            <FRow><Label $req>Key</Label><Box $w={453}><Fit w={84}>custom.script[2]</Fit></Box><Gap $w={3} /><Btn $w={57}>Select</Btn></FRow>
            <FRow><Label>Type of information</Label><FieldSelect w={149} text="Text" tw={22} /></FRow>
            <FRow><Label $req>Update interval</Label><Box $w={150}>1m</Box></FRow>
            <FRow><Label>Custom intervals</Label>
              <Intervals>
                <IHead><span>Type</span><span>Interval</span><span>Period</span><span>Action</span></IHead>
                <IGrid>
                  <FRow><Seg $w={65} $on $side="l">Flexible</Seg><Seg $w={83} $side="r">Scheduling</Seg></FRow>
                  <Box $w={158} $ph>50s</Box><Box $w={158} $ph>1-7,00:00-24:00</Box><Link>Remove</Link>
                </IGrid>
                <AddLine><Link>Add</Link></AddLine>
              </Intervals>
            </FRow>
            <FRow><Label $req>History storage period</Label><Seg $w={126} $side="l">Do not keep history</Seg><Seg $w={103} $on $side="r">Storage period</Seg><Box $w={75} $ml={2}>90d</Box></FRow>
            <FRow><Label>Populates host inventory field</Label><FieldSelect w={207} text="-None-" tw={37} /></FRow>
            <FRow><Label>Description</Label>
              <TextArea><Ico s={9} vb={9} c="#555" sw={0.9}><path d="M1 8.500L8.500 1M5 8.500L8.500 5" /></Ico></TextArea>
            </FRow>
            <EnabledRow><Label>Enabled</Label><Check><svg width="10" height="9" viewBox="0 0 10 9"><path d="M1 4.500L3.800 7.200 9 1" fill="none" stroke="#0275b8" strokeWidth="2.200" /></svg></Check></EnabledRow>
            <Buttons><Btn $w={46} $kind="main">Add</Btn><Btn $w={46} $kind="alt">Test</Btn><Btn $w={61} $kind="alt">Cancel</Btn></Buttons>
          </Form>
        </Panel>
        <PageFoot><Fit w={218}>Zabbix 6.0.32. © 2001–2024, <u>Zabbix SIA</u></Fit></PageFoot>
      </Page>
    </Zabbix>
  );
}

/* ---------- taskbar ---------- */
const Bar = styled.div`
  height: 30px; display: flex; align-items: center; flex: none; overflow: hidden; color: #fff; font-size: 12px;
  background: linear-gradient(90deg, #262b4d 0, #2a2a4c 300px, #1c2546 640px, #1e2748 960px, #332e4b 1300px, #352f4c 1650px, #30304a 1800px, #323a4d 100%);
`;
const TaskButton = styled.span<{ $on?: boolean; $open?: boolean }>`
  width: 37px; height: 30px; flex: none; display: flex; align-items: center; justify-content: center; padding-top: 1px;
  background: ${(p) => (p.$on ? "#53537a" : "transparent")};
  ${(p) => (p.$on || p.$open) && css`
    background-image: linear-gradient(#b9b5f5, #b9b5f5); background-repeat: no-repeat; background-size: ${p.$on ? 33 : 28}px 2px; background-position: ${p.$on ? "0" : "5px"} 28px;
  `}
`;
const Edge = styled.span` width: 1px; height: 30px; background: #6d7082; `;
const Layers = () => <Raw><path d="M0 9l8 5 8-5-8-4z" fill="#e3342b" /><path d="M0 11l8 5 8-5-2-1-6 3-6-3z" fill="#c9241f" /><path d="M0 7l8 5 8-5-8-4z" fill="#ffd91c" /><path d="M0 5l8 5 8-5-8-5z" fill="#3f9c35" /><circle cx="8" cy="5" r="2.800" fill="#14301a" /><circle cx="8" cy="5" r="1.200" fill="#8fd0a0" /></Raw>;
const Chrome = () => <Raw><circle cx="8" cy="8" r="8" fill="#fbc116" /><path d="M1.070 4A8 8 0 0 1 15 4.200H8z" fill="#e33b2e" /><path d="M1.070 4L4.600 10 8 16A8 8 0 0 1 1.070 4z" fill="#2da94f" /><path d="M1.070 4L4.500 10 8 4.200z" fill="#e33b2e" /><circle cx="8" cy="8" r="3.900" fill="#fff" /><circle cx="8" cy="8" r="3" fill="#3b7ded" /></Raw>;
const Firefox = () => <Raw><circle cx="8" cy="8.500" r="7.500" fill="#ff6a25" /><path d="M9 0c4 2 7 5 6.500 9.500L11 5z" fill="#ffd43a" /><path d="M1 5c0 8 6 9 10 8-5 0-8-3-7-8L3 2z" fill="#f6326a" /><circle cx="8.300" cy="8.500" r="3.500" fill="#7b4be8" /><path d="M8 5c-2-1-4 0-4 2l4 1z" fill="#ffb02e" /></Raw>;

const taskApps: { icon: ReactNode; on?: boolean; open?: boolean }[] = [
  { icon: <Raw><path d="M0 2h6l1 1.500h9V14H0z" fill="#e8a728" /><path d="M0 5h16v9H0z" fill="#fdd663" /><path d="M3 9h10v5h-3v-3H6v3H3z" fill="#3a93e0" /></Raw> },
  { icon: <Raw><path d="M3 2h12l-2 13H1z" fill="#8cc6cf" /><path d="M4 3h10l-2 10H2z" fill="#b9e0e4" /><path d="M4 1v2M7 1v2M10 1v2M13 1v2" stroke="#dde" /><path d="M4.500 6h7M4 9h7" stroke="#7fb3bd" /></Raw> },
  { icon: <Raw><ellipse cx="7" cy="10" rx="6.500" ry="5" fill="#b8d8ea" /><circle cx="4" cy="9" r="1.400" fill="#e64b3c" /><circle cx="7.500" cy="7.500" r="1.400" fill="#3fa64b" /><circle cx="6" cy="12.500" r="1.400" fill="#2d66c3" /><path d="M13 0l2 1-1 7-2 7-1-1z" fill="#c9762e" /></Raw> },
  { icon: <Raw><rect x="1" y="1" width="14" height="14" fill="#6fa6de" /><path d="M2 2h12v10H2z" fill="#f2f7fc" /><path d="M3 7l2-4 2 4" stroke="#d9542b" fill="none" strokeWidth="1.300" /><path d="M9 4h4M9 6h4M3 9h10" stroke="#4a7fc0" /></Raw> },
  { icon: <Chrome />, on: true },
  { icon: <Raw><circle cx="8" cy="8" r="7.400" fill="#191512" stroke="#f6ae14" strokeWidth="1.200" /><path d="M8 3.500l4.300 7.500H3.700z" fill="none" stroke="#f6ae14" strokeWidth="1.500" /></Raw> },
  { icon: <Firefox />, open: true },
  { icon: <Raw><path d="M1 4l13-3 .5 3L1.500 7z" fill="#ddd" /><path d="M4 3l2 3M8 2l2 3M12 1l1 3" stroke="#222" strokeWidth="1.500" /><path d="M1 7h14v8H1z" fill="#f3f3f3" /><path d="M3 9h2v4H3zM11 9h2v4h-2z" fill="#d33a2c" /><path d="M7 9h2v4H7z" fill="#3a8a3a" /></Raw> },
  { icon: <Raw><path d="M7 0h2l4 12H3z" fill="#f7850d" /><path d="M6 4h4l.8 2.500H5.200zM4.500 8.500h7l.6 1.500H4z" fill="#eee" /><path d="M1 12h14l1 4H0z" fill="#f7850d" /></Raw> },
  { icon: <Raw><rect y="3" width="16" height="10" fill="#4b9be6" /><path d="M2 5.500h12M2 8h12M4 10.500h8" stroke="#fff" strokeDasharray="1.300 .9" strokeWidth="1.400" /></Raw> },
  { icon: <Badge $bg="#5b95dd" $r={8} $fs={10} $w={400}>qb</Badge> },
  { icon: <Raw><rect x="2" width="12" height="16" fill="#cfe6f5" /><rect x="3.500" y="1.500" width="9" height="3" fill="#4b9be6" /><path d="M4 7.500h8M4 10h8M4 12.500h5" stroke="#6ba6d6" strokeDasharray="1.800 1" strokeWidth="1.500" /><path d="M10.500 11h2v3h-2z" fill="#ef7d24" /></Raw> },
  { icon: <Badge $bg="#2ba3dc" $r={8}><FaTelegramPlane size={10} /></Badge> },
  { icon: <Raw><rect width="16" height="16" fill="#1b2028" /><circle cx="8" cy="8" r="5" fill="none" stroke="#2e86e6" strokeWidth="1.600" /><path d="M6 8h4" stroke="#9cc9fb" strokeWidth="1.500" /></Raw> },
  { icon: <Badge $bg="#fff" $c="#d83cc0" $r={8}><FaMusic size={9} /></Badge> },
  { icon: <Raw><rect y="1" width="16" height="14" fill="#0a0a0a" stroke="#aaa" strokeWidth=".8" /><path d="M0 1h16v2.500H0z" fill="#ccc" /><path d="M4.500 7H2.500v4h2M6.500 8v.5M6.500 10.500v.5M8.500 7l2 4M11 11h3" stroke="#fff" strokeWidth="1" fill="none" /></Raw> },
  { icon: <Badge $bg="#e95420" $r={1}><FaUbuntu size={13} /></Badge>, open: true },
  { icon: <Layers />, open: true },
];

function Taskbar({ tray }: { tray?: boolean }) {
  return (
    <Bar>
      <Slot $w={36}><Ico c="#fff" fill><path d="M0 2.300L6.500 1.400v6.100H0zM7.300 1.300L16 0v7.500H7.300zM0 8.300h6.500v6.200L0 13.600zM7.300 8.300H16V16l-8.700-1.200z" /></Ico></Slot>
      <Slot $w={36}><Ico c="#fff" sw={1.3}><circle cx="9.800" cy="6" r="5.300" /><path d="M6 9.800L.8 15.200" /></Ico></Slot>
      <Slot $w={36}><Ico c="#fff" sw={1.3}><path d="M1 4.500h9v7H1zM1 .5v1.500h9V.5M1 15.500V14h9v1.500M14 .5v15M13.500 5.500h1v2h-1z" /></Ico></Slot>
      <Gap $w={2.5} />
      {taskApps.map((a, i) => <TaskButton key={i} $on={a.on} $open={a.open}>{a.icon}</TaskButton>)}
      <Gap />
      {tray ? (
        <>
          <Slot $w={24}><Badge $bg="#1a1d19" $c="#76b900"><Ico s={11} c="#76b900" sw={1.5}><path d="M1 8c4-6 10-6 14 0-4 6-10 6-14 0zM5 8c2-3 5-2 6 0-2 2-4 2-4 0" /></Ico></Badge></Slot>
          <Slot $w={24}><Layers /></Slot>
          <Slot $w={24}><Badge $bg="#d51007" $r={7}><FaLastfm size={10} /></Badge></Slot>
          <Slot $w={24}><Raw><circle cx="8" cy="7" r="7" fill="#d9dfe2" /><path d="M2 5l4-3 5 2-3 5-4 3z" fill="#4ba36b" /><path d="M9 9h5l-2 6-4-2z" fill="#3f86cf" /></Raw></Slot>
          <Slot $w={24}><Raw><circle cx="8" cy="7.500" r="7.500" fill="#1b94a8" /><path d="M4.500 7.500h6a3 3 0 1 0-1 2.500" stroke="#fff" strokeWidth="1.800" fill="none" /><circle cx="12" cy="12" r="3" fill="#2d7bd1" /></Raw></Slot>
          <Slot $w={24}><Ico c="#fff" sw={1}><path d="M1 6v4h2l3.500 3V3L3 6zM9 6c1 1.200 1 2.800 0 4M11.500 4.500c1.800 2 1.800 5 0 7" /><path d="M14 3c2.600 3 2.600 7 0 10" stroke="#889" /></Ico></Slot>
          <Slot $w={24}><Ico c="#fff" sw={1}><path d="M5.500.5h5v4h-5zM4 4.500h8V12c0 4-8 4-8 0zM10 14l2 2 4-5" /></Ico></Slot>
          <Slot $w={24}><Raw><path d="M1 3l5-3 8 8 2 8-8-3-6-3z" fill="#111" /><path d="M3 2c4 1 6 4 6 8M2 11l6 2" stroke="#eee" strokeWidth="1.600" fill="none" /></Raw></Slot>
          <Slot $w={24}><Raw><path d="M8 0l7 2v6c0 4-4 7-7 8-3-1-7-4-7-8V2z" fill="#fff" /><path d="M8 0v16M1 7h14" stroke="#333" /><path d="M11.500 8L16 16H7z" fill="#ffb900" /></Raw></Slot>
          <Slot $w={24}><Ico c="#fff" sw={1}><path d="M3.500 3.500h12v8h-12zM9 11.500V14M5.500 14.500h7M.5 1.500h4v4h-4z" /></Ico></Slot>
          <Gap $w={6} /><Fit w={23}>ENG</Fit><Gap $w={13} /><Fit w={27}>16:09</Fit>
          <Slot $w={52}><Ico c="#fff" fill><path d="M0 1h16v12H8l-2 3v-3H0zM3 4h10v1H3zM3 6.500h10v1H3zM3 9h7v1H3z" fillRule="evenodd" /></Ico></Slot>
          <Gap $w={3} /><Edge /><Gap $w={3} />
        </>
      ) : (<><Fit w={27}>16:09</Fit><Gap $w={6} /></>)}
    </Bar>
  );
}

/* ---------- Firefox ---------- */
const FoxTabs = styled.div` height: 44px; background: #eaeaed; display: flex; align-items: center; flex: none; color: #3c3c44; `;
const FoxView = styled.span` width: 43px; height: 44px; display: grid; place-items: center; border-right: 1px solid #c9c9cf; padding-right: 3px; `;
const FoxTab = styled.span`
  width: 221px; height: 36px; margin: 0 15px 0 4px; border-radius: 4px; background: #fbfbfd; box-shadow: 0 0 3px rgba(0,0,0,.3); display: flex; align-items: center; padding: 0 12px 0 9px; gap: 8px; font-size: 12px;
`;
const FoxBar = styled.div` height: 40px; background: #f9f9fb; display: flex; align-items: center; flex: none; padding-left: 6px; `;
const FoxUrl = styled.div`
  width: 856px; height: 32px; margin-left: 106px; border-radius: 4px; background: #f0f0f4; display: flex; align-items: center; padding: 0 2px; color: #8a8a92; font-size: 14.500px; b { font-weight: 400; color: #15141a; }
`;
const FoxMarks = styled.div` height: 29px; background: #f9f9fb; border-bottom: 1px solid #c8c8cb; display: flex; align-items: center; padding: 0 12px 0 12px; font-size: 12px; color: #15141a; flex: none; `;
const NL = styled.span` position: relative; width: 16px; height: 16px; border-radius: 8px; background: linear-gradient(#213a5a 40%, #3b8a4f); `;
const NLTag = styled.span` position: absolute; left: 4px; top: -6px; background: #1a2d52; color: #fff; font: 600 9px/11px ${UI}; width: 17px; text-align: center; border-radius: 1px; `;
const LastGrey = styled.span` display: flex; flex-direction: column; align-items: center; gap: 2px; padding-top: 6px; `;
const Dot = styled.i` width: 4px; height: 4px; border-radius: 2px; background: #1fc39b; `;
const grey = "#5b5b66";

const foxMarks: [ReactNode, string, number, number][] = [
  [<Badge $bg="#fff"><Ico s={12} c="#f43" fill><path d="M8 0a5.800 5.800 0 0 1 5.800 5.800c0 4-5 4.400-5.300 10.200h-1C7.200 10.200 2.200 9.800 2.200 5.800A5.800 5.800 0 0 1 8 0z" /><circle cx="8" cy="5.800" r="2" fill="#fff" /></Ico></Badge>, "Яндекс.Карты — ищи...", 127, 160],
  [<Insta />, "Loseva", 35, 68],
  [<Insta />, "Ruslan (@ruslankarasi...", 124, 160],
  [<Gmail />, "Gmail", 30, 63],
  [<FcGoogle size={15} />, "Найти устройство", 98, 131],
  [<Insta />, "Светлана (@sveta17m...", 127, 160],
  [<Insta />, "Вячеслав ИВКА Пили...", 126, 160],
  [<Insta />, "нищий и умный, но ...", 122, 160],
  [<Badge $bg="#74aa9c" $r={2}><RiOpenaiFill size={13} /></Badge>, "https://chat.openai.co...", 126, 150],
];

function FirefoxTop() {
  return (
    <>
      <FoxTabs>
        <FoxView><Ico c="#77777f" sw={1.4}><path d="M3 .8h10M1.800 4h12.400M1.200 6.500v6.800c0 1 .8 1.900 1.800 1.900h10c1 0 1.800-.9 1.800-1.900V6c0-1-.8-1.800-1.800-1.800H3c-1 0-1.800.8-1.800 1.800M6.500 8.500h3" /></Ico></FoxView>
        <FoxTab><RiOpenaiFill size={14} color="#6b6b70" /><Fit w={47}>ChatGPT</Fit><Gap /><Cross s={8} sw={1.1} /></FoxTab>
        <Plus c="#5b5b66" />
        <Gap />
        <Slot $w={30}><Ico s={12} vb={12} c="#77777f" sw={1.2}><path d="M.5 3L6 9l5.500-6" /></Ico></Slot>
        <Gap $w={45} />
        <WindowButtons c="#333" gap={46} />
      </FoxTabs>
      <FoxBar>
        <Slot $w={36}><BackArrow c={grey} /></Slot>
        <Slot $w={36}><FwdArrow c="#b9b9c0" /></Slot>
        <Slot $w={36}><Ico c={grey} sw={1.5}><path d="M14 8.500A6 6 0 1 1 12.500 4M14 1v4h-4" /></Ico></Slot>
        <FoxUrl>
          <Slot $w={28}><Ico c={grey} sw={1.3}><path d="M8 .8l6.300 2.700c.2 5.500-2 9.500-6.300 11.700C3.700 13 1.500 9 1.700 3.500z" /></Ico></Slot>
          <Slot $w={28}><Ico c={grey} sw={1.4}><path d="M2.500 7.500h11v7h-11zM4.500 7V4.500a3.500 3.500 0 0 1 7 0V7" /></Ico></Slot>
          <Slot $w={28}><Ico c={grey} sw={1.3}><path d="M1 5h8M7 11h8" /><circle cx="12" cy="5" r="2" /><circle cx="4" cy="11" r="2" /></Ico></Slot>
          <Gap $w={4} />
          <Fit w={401}>https://<b>chatgpt.com</b>/c/d3e3b7f7-7da6-4168-a33e-cf837ba08bb1</Fit>
          <Gap />
          <Slot $w={28}><Ico c={grey} sw={1.3}><path d="M2 1h12v14H2zM5 4.500h6M5 7.500h6M5 10.500h4" /></Ico></Slot>
          <Slot $w={28}><Star c={grey} /></Slot>
        </FoxUrl>
        <Gap />
        <Slot $w={36}><Ico c={grey} sw={1.4}><path d="M1 2.500h14V8c0 8-14 8-14 0zM4.500 6.500L8 10l3.500-3.500" /></Ico></Slot>
        <Slot $w={36}><Abp /></Slot>
        <Slot $w={36}><Ico c={grey} sw={1.3}><circle cx="8" cy="8" r="7" /><circle cx="8" cy="5.800" r="2" fill={grey} /><path d="M4.500 9.500h7c0 4-7 4-7 0z" fill={grey} /></Ico></Slot>
        <Slot $w={36}><NL><NLTag>NL</NLTag></NL></Slot>
        <Slot $w={36}><Ico c={grey} sw={1.4}><path d="M2 5.500h4V3a2 2 0 0 1 4 0v2.500h4V15H2v-3.500c3.500 1 3.500-4 0-3z" /></Ico></Slot>
        <Slot $w={36}><LastGrey><FaLastfm size={15} color="#b9b9bd" /><Dot /></LastGrey></Slot>
        <Slot $w={36}><Ico s={14} c={grey} sw={1.5}><path d="M1 3h14M1 8h14M1 13h14" /></Ico></Slot>
        <Gap $w={6} />
      </FoxBar>
      <FoxMarks>
        {foxMarks.map(([icon, text, tw, w], i) => <Mark key={i} $w={w} $gap={4}>{icon}<Fit w={tw}>{text}</Fit></Mark>)}
        <Gap />
        <Ico s={14} vb={12} c={grey} sw={1}><path d="M1 1.500L5 6l-4 4.500M6.500 1.500L10.500 6l-4 4.500" /></Ico><Gap $w={15} />
        <Folder c={grey} /><Gap $w={3} /><Fit w={91}>Другие закладки</Fit>
      </FoxMarks>
    </>
  );
}

/* ---------- ChatGPT ---------- */
const Gpt = styled.div` height: 757px; display: flex; background: #fff; color: #0d0d0d; flex: none; font-size: 14px; `;
const GSide = styled.aside` width: 260px; background: #f9f9f9; display: flex; flex-direction: column; flex: none; `;
const GTop = styled.div` height: 56px; display: flex; justify-content: space-between; align-items: center; padding: 0 22px; `;
const GScroll = styled.div` height: 629px; display: flex; overflow: hidden; padding-right: 4px; `;
const GList = styled.div` width: 239px; padding: 0 8px 0 12px; flex: none; `;
const GMenu = styled.div` height: 40.500px; display: flex; align-items: center; gap: 10px; padding-left: 8px; `;
const Ring = styled.span` width: 24px; height: 24px; border: 1px solid #e3e3e3; border-radius: 12px; background: #fff; display: grid; place-items: center; flex: none; `;
const NoRing = styled.span` width: 24px; display: grid; place-items: center; `;
const GHead = styled.div` height: 56px; padding: 32px 0 0 8px; font-size: 12px; font-weight: 600; line-height: 16px; `;
const GItem = styled.div<{ $on?: boolean }>`
  width: 219px; height: 36px; border-radius: 8px; padding: 0 8px; display: flex; align-items: center; justify-content: space-between; background: ${(p) => (p.$on ? "#ececec" : "none")};
`;
const GText = styled.span<{ $w: number; $fade?: boolean }>`
  width: ${(p) => p.$w}px; white-space: nowrap; ${(p) => p.$fade && "mask-image: linear-gradient(to right, #000 80%, transparent);"}
`;
const ScrollBar = styled.div<{ $w: number; $h: number }>` width: ${(p) => p.$w}px; height: ${(p) => p.$h}px; background: #f0f0f0; display: flex; flex-direction: column; align-items: center; padding: 5px 0 4px; flex: none; `;
const Thumb = styled.div<{ $h: number }>` width: 100%; height: ${(p) => p.$h}px; background: #cdcdcd; flex: none; `;
const Upgrade = styled.div` height: 72px; display: flex; align-items: center; padding: 2px 0 0 20px; gap: 8px; line-height: 17px; small { display: block; font-size: 12px; color: #b4b4b4; } `;
const GMain = styled.div` width: 1180px; display: flex; flex-direction: column; position: relative; `;
const GUpper = styled.div` height: 673px; display: flex; `;
const GColumn = styled.div` width: 1163px; display: flex; flex-direction: column; `;
const GHeader = styled.div` height: 55px; display: flex; align-items: center; padding: 2px 20px 0 24px; font-size: 17.500px; font-weight: 600; color: #7d7d7d; flex: none; `;
const Avatar = styled.span` width: 32px; height: 32px; border-radius: 16px; background: #f39c12; color: #fdf3e0; font: 400 13px/32px ${UI}; text-align: center; margin-left: 21px; `;
const Thread = styled.div`
  flex: 1; overflow: hidden; padding-left: 253px; font-size: 15.500px;
  strong { font-weight: 600; }
  code { font: 400 13.500px "DejaVu Sans Mono", "Liberation Mono", monospace; -webkit-text-stroke: 0.350px currentColor; }
  mark { background: #b0b0b0; color: #fff; padding: 1px 0; }
`;
const Lines = styled.div` margin-top: -21.300px; `;
const Line = styled.div<{ $lvl?: number }>` height: 36.400px; display: flex; align-items: center; padding-left: ${(p) => (p.$lvl === 2 ? 44 : 9)}px; `;
const Bullet = styled.i` width: 6px; height: 6px; border-radius: 3px; background: #0d0d0d; margin-right: 15px; flex: none; `;
const Num = styled.span` width: 24px; flex: none; `;
const H3 = styled.h3` margin: 0; height: 52px; padding-top: 15px; font-size: 19.500px; font-weight: 600; line-height: 37px; `;
const Para = styled.p` margin: 15.500px 0 0; line-height: 28px; height: 56px; `;
const Actions = styled.div` margin-top: 21px; height: 18px; display: flex; align-items: center; margin-left: -3px; `;
const Anchor = styled.span` position: relative; display: flex; `;
const Quote = styled.span`
  position: absolute; left: 201px; top: 3px; width: 43px; height: 29px; border-radius: 13px; background: #fff; border: 1px solid #e3e3e3; box-shadow: 0 4px 10px rgba(0,0,0,.12); display: grid; place-items: center;
`;
const Composer = styled.div` width: 768px; height: 52px; margin: 0 auto; border-radius: 26px; background: #f4f4f4; display: flex; align-items: center; padding: 0 10px 0 20px; font-size: 16px; color: #9b9b9b; flex: none; `;
const Placeholder = styled.span` padding-top: 2px; `;
const Send = styled.span` width: 32px; height: 32px; border-radius: 16px; background: #d7d7d7; display: grid; place-items: center; `;
const Note = styled.div` text-align: center; font-size: 12px; line-height: 34px; height: 32px; color: #6b6b6b; `;
const Help = styled.span` position: absolute; right: 12px; bottom: 12px; width: 24px; height: 24px; border: 1px solid #dcdcdc; border-radius: 12px; font-size: 12px; line-height: 22px; text-align: center; color: #666; `;

const g = "#7d7d7d";
const L2 = ({ w, children }: { w: number; children: ReactNode }) => <Line $lvl={2}><Bullet /><Fit w={w}>{children}</Fit></Line>;
const Hist = ({ t, w, fade }: { t: string; w: number; fade?: boolean }) => <GItem><GText $w={203} $fade={fade}><Fit w={w}>{t}</Fit></GText></GItem>;

function ChatGpt() {
  return (
    <Gpt>
      <GSide>
        <GTop>
          <Ico s={21} vb={21} c={g} sw={1.8}><rect x="1" y="2" width="19" height="17" rx="4" /><path d="M9 2v17M4.500 6.500h1.500M4.500 10h1.500" /></Ico>
          <Ico s={20} vb={20} c={g} sw={1.8}><path d="M10 2H6C3 2 1.500 3.500 1.500 6.500V14c0 3 1.500 4.500 4.500 4.500h7.500c3 0 4.500-1.500 4.500-4.500v-4M16 1.500c1.500-1 3.500 1 2.500 2.500L12 11.500l-4 1 1-4z" /></Ico>
        </GTop>
        <GScroll>
          <GList>
            <GMenu><Ring><RiOpenaiFill size={17} /></Ring><Fit w={54}>ChatGPT</Fit></GMenu>
            <GMenu><NoRing><Ico c={g} sw={1.5}><circle cx="4" cy="4" r="2.300" /><circle cx="12" cy="4" r="2.300" /><circle cx="4" cy="12" r="2.300" /><circle cx="12" cy="12" r="2.300" /></Ico></NoRing><Fit w={71}>Обзор GPT</Fit></GMenu>
            <GHead><Fit w={45}>Сегодня</Fit></GHead>
            <GItem $on><GText $w={178} $fade><Fit w={178}>PostgreSQL User Creation Iss</Fit></GText><Ico s={16} c={g} fill><circle cx="3" cy="8" r="1.500" /><circle cx="8" cy="8" r="1.500" /><circle cx="13" cy="8" r="1.500" /></Ico></GItem>
            <Hist t="Упражнения для преодоления с" w={203} fade />
            <Hist t="Нанесение кондиционера на во" w={203} fade />
            <Hist t="Coping with Shame CPT" w={147} />
            <GHead><Fit w={33}>Вчера</Fit></GHead>
            <Hist t="Работа с эмоцией стыда" w={154} />
            <GHead><Fit w={113}>Предыдущие 7 дней</Fit></GHead>
            <Hist t="Бесплатные фитнес-приложени" w={200} fade />
            <Hist t="Встречи с близнецами" w={142} />
            <Hist t="План тренировок для живота" w={187} fade />
            <Hist t="Запоминание размера окон" w={179} />
            <Hist t="Фон для чтения экрана" w={147} />
            <Hist t="Дозировка парацетамола при го" w={203} fade />
          </GList>
          <ScrollBar $w={17} $h={629}><Chevron dir="up" s={9} c="#555" sw={1.8} /><Gap2 $h={3} /><Thumb $h={264} /><Gap2 /><Chevron s={9} c="#555" sw={1.8} /></ScrollBar>
        </GScroll>
        <Upgrade>
          <Ring><Ico s={14} c="#111" fill><path d="M6 3c.6 4 1.500 5 5.500 5.500C7.500 9 6.600 10 6 14 5.400 10 4.500 9 .5 8.500 4.500 8 5.400 7 6 3zM12.500 1c.3 2 .8 2.500 2.500 2.800-1.700.3-2.200.8-2.500 2.700-.3-1.900-.8-2.400-2.500-2.700 1.700-.3 2.200-.8 2.500-2.800zM12.500 10.500c.3 1.800.8 2.200 2.200 2.500-1.400.3-1.900.7-2.200 2.500-.3-1.800-.8-2.200-2.200-2.500 1.400-.3 1.900-.7 2.200-2.500z" /></Ico></Ring>
          <div><Fit w={97}>Обновить план</Fit><small><Fit w={181}>Получите GPT-4, DALL·E и мног...</Fit></small></div>
        </Upgrade>
      </GSide>
      <GMain>
        <GUpper>
          <GColumn>
            <GHeader><Fit w={71}>ChatGPT</Fit><Gap $w={8} /><Ico s={12} vb={12} c="#b4b4b4" sw={1.5}><path d="M1 3.500l5 5 5-5" /></Ico><Gap />
              <Ico s={20} vb={20} c={g} sw={1.9}><path d="M10 13V2M5.500 6L10 1.500 14.500 6M1.500 12.500V15c0 2 1 3 3 3h11c2 0 3-1 3-3v-2.500" /></Ico><Avatar>DB</Avatar></GHeader>
            <Thread>
              <Lines>
                <L2 w={171}>Нажмите "<strong>Create item</strong>".</L2>
                <L2 w={515}>В поле "<strong>Name</strong>" введите название, например, <code>`Custom Script Result`</code>.</L2>
                <L2 w={293}>В поле "<strong>Type</strong>" выберите "<strong>Zabbix agent</strong>".</L2>
                <L2 w={520}>В поле "<strong>Key</strong>" введите <code>`custom.script[1]`</code> (если хотите получить ФИО).</L2>
                <L2 w={337}>В поле "<strong>Type of information</strong>" выберите "<strong>Text</strong>".</L2>
                <L2 w={359}>Остальные поля можно оставить по умолчанию.</L2>
                <L2 w={229}>Нажмите "<strong>Add</strong>" и затем "<strong>Save</strong>".</L2>
                <Line><Num>4.</Num><Anchor><Fit w={425}><strong>Добавьте еще один элемент (item) для получения даты:</strong></Fit><Quote><Ico s={13} c="#111" fill><path d="M4 1.500a3.300 3.300 0 0 1 3.300 3.700c0 4-2 7.300-5.300 9.300l-.8-1.200C3 12 4 10.500 4 8.500A3.500 3.500 0 1 1 4 1.500zM12.200 1.500a3.300 3.300 0 0 1 3.300 3.700c0 4-2 7.300-5.300 9.300l-.8-1.200c1.800-1.300 2.800-2.800 2.800-4.800a3.500 3.500 0 1 1 0-7z" /></Ico></Quote></Anchor></Line>
                <L2 w={308}>В поле "<strong>Key</strong>" введите <code>`<mark>custom.script[2]</mark>`</code>.</L2>
              </Lines>
              <H3><Fit w={190}>4. Проверка работы</Fit></H3>
              <Line><Num>1.</Num><Fit w={522}>Перейдите в раздел "<strong>Monitoring</strong>" &gt; "<strong>Latest data</strong>" и выберите ваш хост.</Fit></Line>
              <Line><Num>2.</Num><Fit w={509}>Убедитесь, что данные из <code>`UserParameter`</code> корректно возвращаются.</Fit></Line>
              <Para>
                <Fit w={614}>Теперь Zabbix будет использовать ваш <code>`UserParameter`</code> для вызова bash-скрипта и</Fit><br />
                <Fit w={644}>возвращения ваших ФИО или текущей даты в зависимости от переданного параметра.</Fit>
              </Para>
              <Actions>
                <Slot $w={30}><Ico c={g} sw={1.3}><path d="M1 6.500v3c0 .8.500 1.200 1.200 1.200h1.300L8 14V2L3.500 5.300H2.200C1.500 5.300 1 5.700 1 6.500zM11 6c.8 1.200.8 2.800 0 4M13.500 4c1.600 2.500 1.600 5.500 0 8" /></Ico></Slot>
                <Slot $w={30}><Ico c={g} sw={1.3}><rect x="1" y="5" width="10" height="10" rx="2" /><path d="M5 5V3c0-1.200.8-2 2-2h6c1.200 0 2 .8 2 2v6c0 1.200-.8 2-2 2h-2" /></Ico></Slot>
                <Slot $w={30}><Ico c={g} sw={1.4}><path d="M2 7a6.200 6.200 0 0 1 11.500-2.500M14 1.500v3.500h-3.500M14 9A6.200 6.200 0 0 1 2.500 11.500M2 14.500V11h3.500" /></Ico></Slot>
                <Slot $w={30}><Ico c={g} sw={1.3}><path d="M11.500 1.500H5C3.500 1.500 3 2 2.500 3.500L1.500 7c-.5 1.800.2 2.800 2 2.800h3L6 13c-.2 1.500 1.700 2.300 2.500.8l3-5.300zM11.500 1.500h1c1.300 0 2 .7 2 2v3c0 1.300-.7 2-2 2h-1z" /></Ico></Slot>
                <Slot $w={24}><Ico c={g} sw={1.2}><path d="M7 3c.6 4 1.500 5 5.500 5.500C8.500 9 7.600 10 7 14c-.6-4-1.500-5-5.500-5.500C5.500 8 6.400 7 7 3zM13 1v3.600M11.200 2.800h3.600" /></Ico></Slot>
                <Slot $w={10}><Ico s={8} vb={8} c="#c4c4c4" sw={1.2}><path d="M.5 2L4 6l3.500-4" /></Ico></Slot>
              </Actions>
            </Thread>
          </GColumn>
          <ScrollBar $w={17} $h={673}><Chevron dir="up" s={9} c="#555" sw={1.8} /><Gap2 /><Thumb $h={24} /><Gap2 $h={4} /><Chevron s={9} c="#555" sw={1.8} /></ScrollBar>
        </GUpper>
        <Composer>
          <Ico s={18} vb={18} c="#111" sw={2}><path d="M2 8v3.500a6 6 0 0 0 13 0V5a4 4 0 0 0-8 0v6.500a1.800 1.800 0 0 0 3.600 0V6" /></Ico><Gap $w={14} />
          <Placeholder><Fit w={140}>Сообщить ChatGPT</Fit></Placeholder><Gap />
          <Send><Ico s={16} c="#fff" sw={1.7}><path d="M8 15V1.500M3 6.500l5-5 5 5" /></Ico></Send>
        </Composer>
        <Note><Fit w={461}>ChatGPT может допускать ошибки. Рекомендуем проверять важную информацию.</Fit></Note>
        <Help>?</Help>
      </GMain>
    </Gpt>
  );
}

export default function App() {
  return (
    <>
      <Global />
      <Desktop>
        <Monitor $w={1920} $h={1080}>
          <ChromeFrame>
            <ChromeTop />
            <ZabbixPage />
          </ChromeFrame>
          <Taskbar tray />
        </Monitor>
        <Monitor $w={1440} $h={900}>
          <FirefoxTop />
          <ChatGpt />
          <Taskbar />
        </Monitor>
      </Desktop>
    </>
  );
}
